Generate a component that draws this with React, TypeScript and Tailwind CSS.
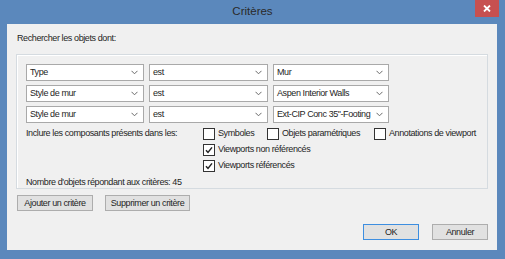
import React from "react";

const font = { fontFamily: '"Liberation Sans", Arial, sans-serif' };

function Chevron() {
  return (
    <svg width="7" height="5" viewBox="0 0 7 5" className="shrink-0">
      <polyline points="0.5,0.8 3.5,3.8 6.5,0.8" fill="none" stroke="#6a6a6a" strokeWidth="1" />
    </svg>
  );
}

function Select({ w, text }: { w: string; text: string }) {
  return (
    <div className={`${w} h-[17px] bg-white border border-[#a9a9a9] flex items-center justify-between pl-[3px] pr-[5px] whitespace-nowrap`}>
      <span>{text}</span>
      <Chevron />
    </div>
  );
}

function Check({ checked, label, w }: { checked?: boolean; label: string; w: string }) {
  return (
    <div className={`${w} flex items-center gap-[3px] h-[13px] shrink-0 whitespace-nowrap`}>
      <div className="w-[12px] h-[12px] border border-[#333] bg-white flex items-center justify-center shrink-0">
        {checked && (
          <svg width="8" height="8" viewBox="0 0 8 8">
            <polyline points="1,4.2 3,6.4 7,1.4" fill="none" stroke="#222" strokeWidth="1.5" />
          </svg>
        )}
      </div>
      <span>{label}</span>
    </div>
  );
}

function Btn({ w, text, def }: { w: string; text: string; def?: boolean }) {
  return (
    <div
      className={`${w} h-[16px] flex items-center justify-center bg-[#e1e1e1] border ${
        def ? "border-[#3d8ee0]" : "border-[#adadad]"
      }`}
    >
      {text}
    </div>
  );
}

export default function App() {
  return (
    <div className="w-[505px] h-[259px] bg-[#5b88bc] flex flex-col" style={font}>
      <div className="h-[24px] flex items-start">
        <div className="w-[30px]" />
        <div className="flex-1 h-[24px] flex items-center justify-center text-[11.5px] text-[#2a2a2a] pb-[1px]">
          Critères
        </div>
        <div className="w-[24px] h-[17px] bg-[#c75050] mr-[6px] flex items-center justify-center">
          <svg width="8" height="7" viewBox="0 0 8 7">
            <path d="M1 0.5 L7 6.5 M7 0.5 L1 6.5" stroke="white" strokeWidth="1.8" />
          </svg>
        </div>
      </div>
      <div className="w-[490px] h-[226px] ml-[7px] bg-[#f0f0f0] flex flex-col pl-[9px] pr-[9px] text-[9px] tracking-[-0.4px] text-[#1e1e1e] leading-none">
        <div className="h-[12px] mt-[8px] ml-[1px] flex items-center">Rechercher les objets dont:</div>
        <div className="mt-[10px] w-[472px] h-[135px] border border-[#d5dbe0] shadow-[inset_1px_1px_0_#ffffff] pl-[9px] pt-[9px] flex flex-col">
          <div className="flex flex-col gap-[4px]">
            <div className="flex gap-[5px]">
              <Select w="w-[118px]" text="Type" />
              <Select w="w-[119px]" text="est" />
              <Select w="w-[116px]" text="Mur" />
            </div>
            <div className="flex gap-[5px]">
              <Select w="w-[118px]" text="Style de mur" />
              <Select w="w-[119px]" text="est" />
              <Select w="w-[116px]" text="Aspen Interior Walls" />
            </div>
            <div className="flex gap-[5px]">
              <Select w="w-[118px]" text="Style de mur" />
              <Select w="w-[119px]" text="est" />
              <Select w="w-[116px]" text="Ext-CIP Conc 35''-Footing" />
            </div>
          </div>
          <div className="mt-[4px] flex">
            <div className="w-[177px] h-[13px] flex items-center">Inclure les composants présents dans les:</div>
            <div className="flex flex-col gap-[3px]">
              <div className="flex">
                <Check w="w-[64px]" label="Symboles" />
                <Check w="w-[107px]" label="Objets paramétriques" />
                <Check w="w-[100px]" label="Annotations de viewport" />
              </div>
              <Check w="w-[150px]" checked label="Viewports non référencés" />
              <Check w="w-[150px]" checked label="Viewports référencés" />
            </div>
          </div>
          <div className="mt-[4px] h-[12px] flex items-center">Nombre d'objets répondant aux critères: 45</div>
        </div>
        <div className="mt-[6px] ml-[1px] flex gap-[12px]">
          <Btn w="w-[76px]" text="Ajouter un critère" />
          <Btn w="w-[85px]" text="Supprimer un critère" />
        </div>
        <div className="mt-[13px] flex justify-end gap-[13px]">
          <Btn w="w-[56px]" text="OK" def />
          <Btn w="w-[56px]" text="Annuler" />
        </div>
      </div>
    </div>
  );
}
